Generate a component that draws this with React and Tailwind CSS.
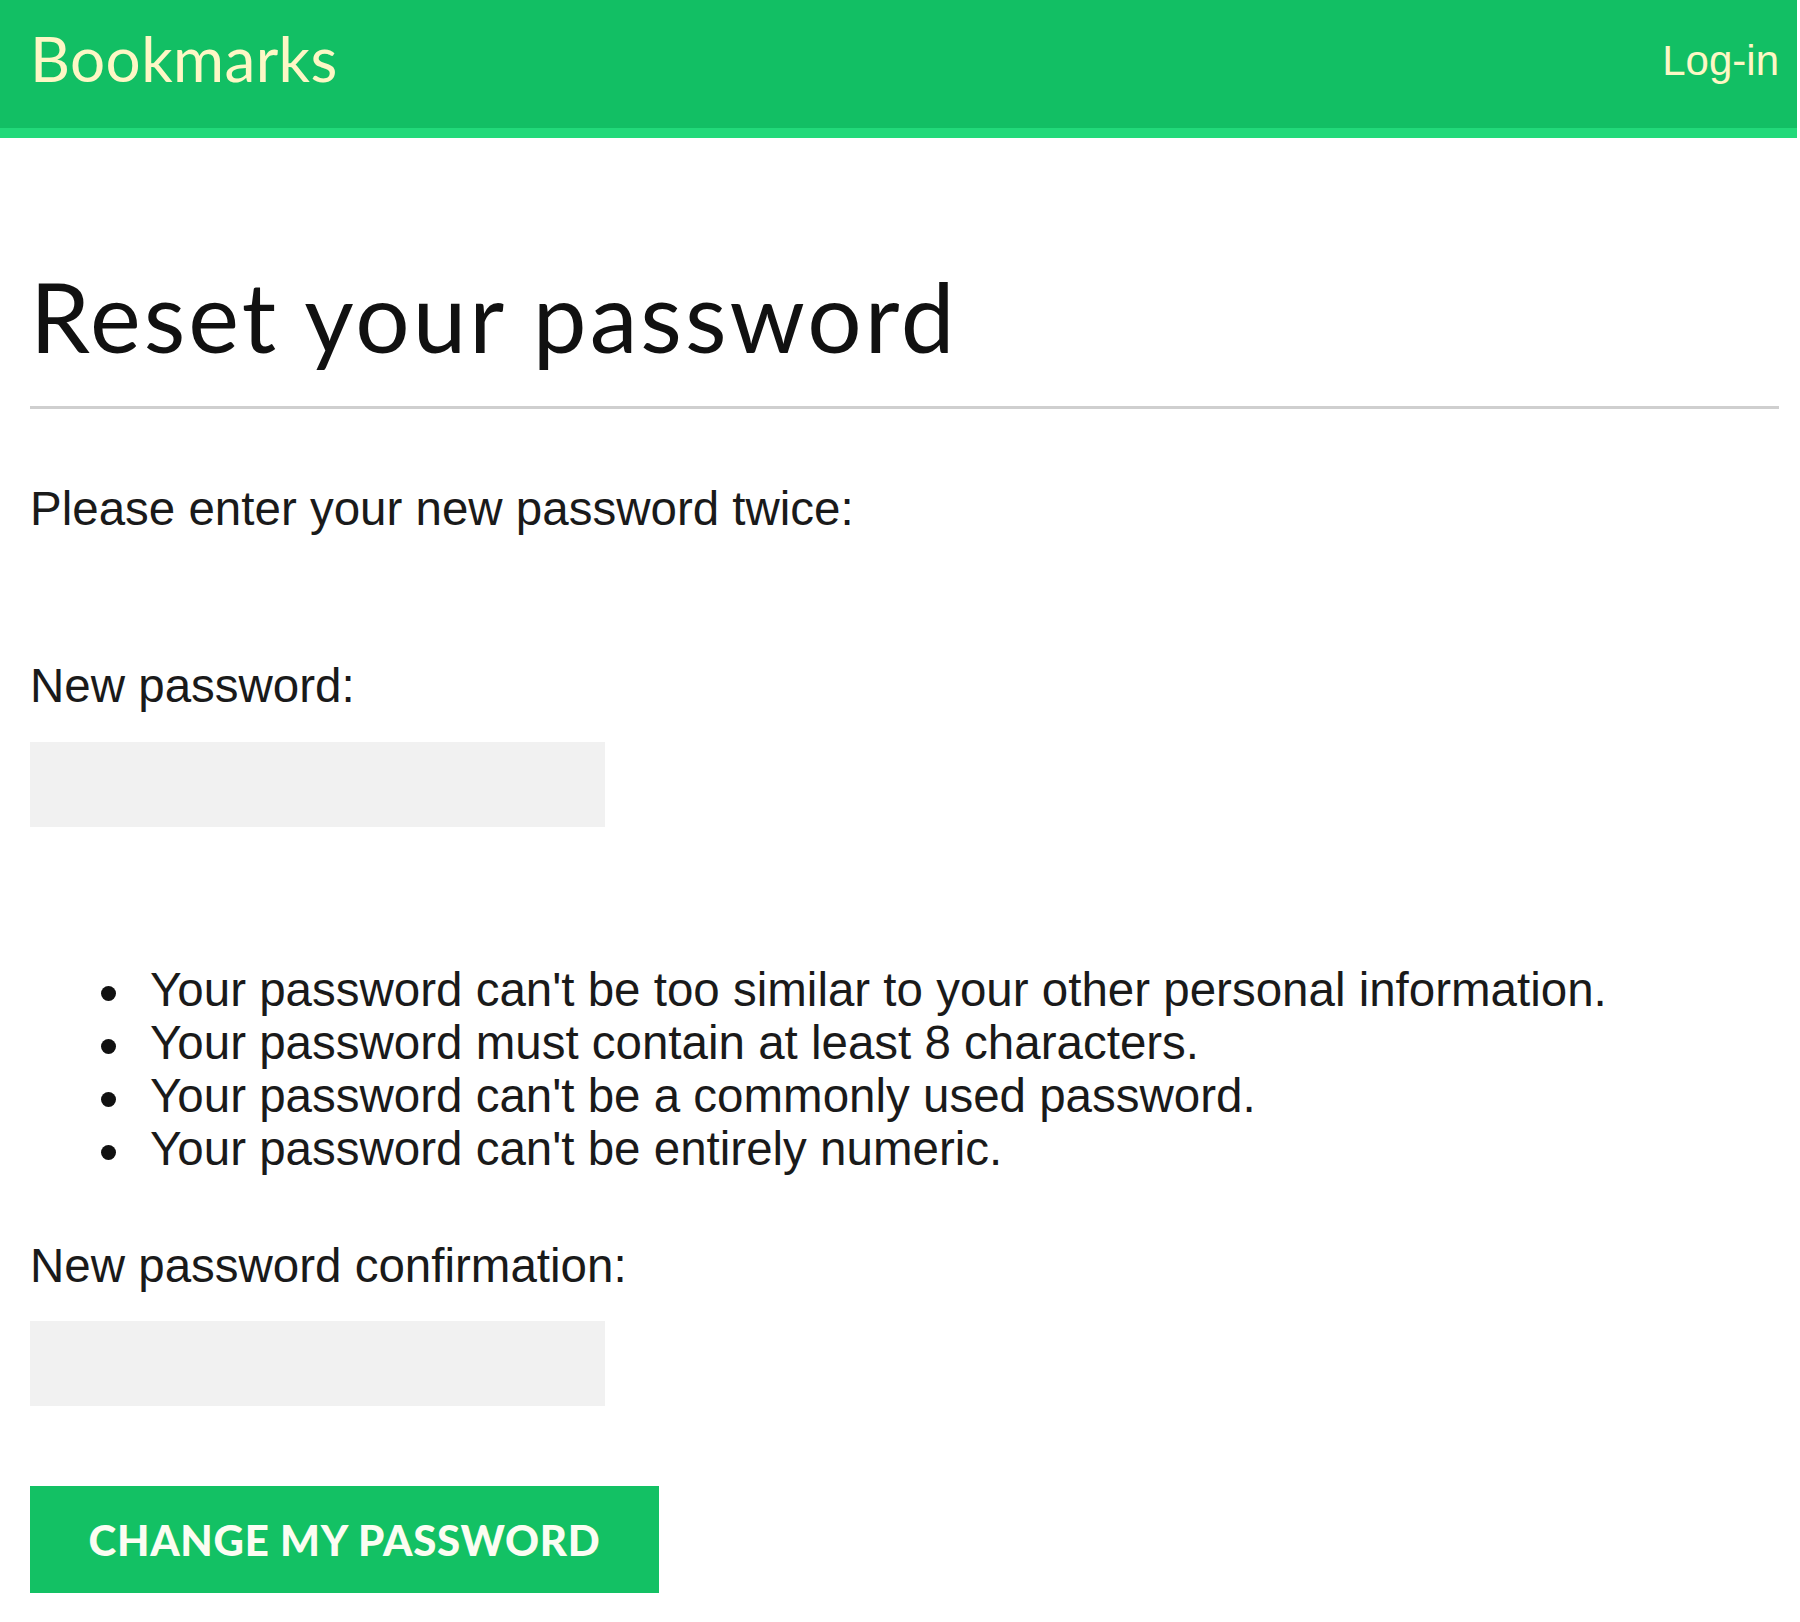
import { useState } from 'react';

const rules = [
  "Your password can't be too similar to your other personal information.",
  'Your password must contain at least 8 characters.',
  "Your password can't be a commonly used password.",
  "Your password can't be entirely numeric.",
];

const App = () => {
  const [password, setPassword] = useState('');
  const [confirm, setConfirm] = useState('');

  return (
    <div className="min-h-[1622px] bg-white">
      {/* Header */}
      <header className="mr-[3px] h-[138px] bg-[#12bf64] border-b-[10px] border-[#22d97a] flex justify-between items-start pl-[30px] pr-[18px]">
        <a href="#" className="mt-[21px] text-[62px] leading-[1.2] tracking-[0.4px] text-[#fdf7c5] font-['Lato',sans-serif]">
          Bookmarks
        </a>
        <a href="#" className="mt-[29px] text-[42px] leading-normal text-[#fdf7c5] font-['Liberation_Sans',Arial,sans-serif]">
          Log-in
        </a>
      </header>

      <main className="pl-[30px] pr-[21px]">
        <h1 className="mt-[120px] text-[96px] leading-[1.2] tracking-[3px] text-[#111] font-['Lato',sans-serif]">
          Reset your password
        </h1>
        <div className="mt-[33px] h-[3px] bg-[#cfcfcf]"></div>

        <form className="font-['Liberation_Sans',Arial,sans-serif] text-[47.5px] leading-[54px] text-[#1a1a1a]">
          <p className="mt-[73px]">Please enter your new password twice:</p>

          <label className="block mt-[123px]">New password:</label>
          <input
            type="password"
            value={password}
            onChange={(e) => setPassword(e.target.value)}
            className="block mt-[29px] w-[575px] h-[85px] bg-[#f1f1f1] border-0 outline-none px-4"
          />

          {/* Password rules */}
          <ul className="mt-[136px] pl-[71px] leading-[53px]">
            {rules.map((rule) => (
              <li key={rule} className="flex items-start">
                <span className="mt-[23px] mr-[34px] w-[15px] h-[15px] shrink-0 rounded-full bg-[#111]"></span>
                <span>{rule}</span>
              </li>
            ))}
          </ul>

          <label className="block mt-[64px]">New password confirmation:</label>
          <input
            type="password"
            value={confirm}
            onChange={(e) => setConfirm(e.target.value)}
            className="block mt-[28px] w-[575px] h-[85px] bg-[#f1f1f1] border-0 outline-none px-4"
          />

          <button
            type="button"
            className="block mt-[80px] w-[629px] h-[107px] bg-[#13c164] text-[#fbfdf2] text-[42px] font-black tracking-[0.7px] leading-none font-['Lato',sans-serif]"
          >
            CHANGE MY PASSWORD
          </button>
        </form>
      </main>
    </div>
  );
};

export default App;
